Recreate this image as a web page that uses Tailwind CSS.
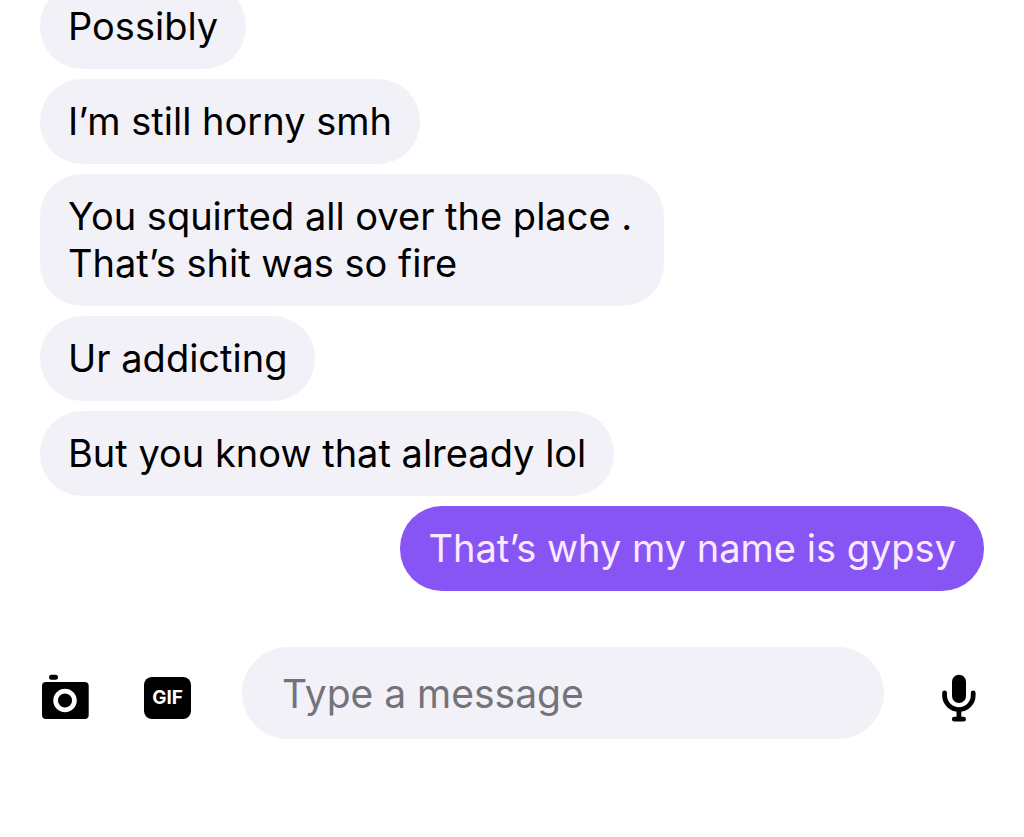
<!DOCTYPE html>
<html lang="en">
<head>
    <meta charset="UTF-8">
    <meta name="viewport" content="width=device-width, initial-scale=1.0">
    <title>Messages</title>
    <script src="https://cdn.jsdelivr.net/npm/@tailwindcss/browser@4"></script>
</head>
<body class="min-h-screen bg-white text-black font-['Inter','Liberation_Sans',sans-serif] overflow-hidden">
    <!-- conversation, scrolled so the first bubble is cut off -->
    <main class="flex flex-col items-start gap-[10px] px-10 -mt-4 text-[38px] leading-[47px]">
        <p class="bg-[#f2f1f8] rounded-[42px] px-7 py-[19px]">Possibly</p>
        <p class="bg-[#f2f1f8] rounded-[42px] px-7 py-[19px]">I’m still horny smh</p>
        <p class="bg-[#f2f1f8] rounded-[42px] pl-7 pr-8 py-[19px]">You squirted all over the place .<br>That’s shit was so fire</p>
        <p class="bg-[#f2f1f8] rounded-[42px] px-7 py-[19px]">Ur addicting</p>
        <p class="bg-[#f2f1f8] rounded-[42px] px-7 py-[19px]">But you know that already lol</p>
        <p class="bg-[#8655f4] text-[#fbeaff] rounded-[42px] px-7 py-[19px] self-end">That’s why my name is gypsy</p>
    </main>

    <!-- message bar -->
    <form class="flex items-center mt-14 pl-10 pr-12">
        <button type="button" aria-label="Camera" class="shrink-0 mt-[10px]">
            <svg class="w-[50px] h-[50px]" viewBox="0 0 50 50">
                <rect x="2" y="9" width="46.7" height="37" rx="4" fill="#000"/>
                <rect x="9" y="1.8" width="9" height="5" rx="2.4" fill="#000"/>
                <circle cx="25" cy="27.5" r="9.4" fill="none" stroke="#fff" stroke-width="4.7"/>
            </svg>
        </button>
        <button type="button" aria-label="GIF" class="shrink-0 mt-[10px] ml-[54px] w-[47px] h-[42px] rounded-lg bg-black text-white text-[19px] font-bold">GIF</button>
        <input type="text" aria-label="Message" placeholder="Type a message" class="flex-1 min-w-0 ml-[51px] h-[92px] rounded-[46px] bg-[#f2f1f8] px-10 text-[39px] placeholder:text-[#74737a] outline-none">
        <button type="button" aria-label="Voice message" class="shrink-0 mt-[10px] ml-[58px]">
            <svg class="w-[34px] h-[50px]" viewBox="0 0 34 50">
                <rect x="10" y="1.7" width="14" height="28.3" rx="7" fill="#000"/>
                <path d="M2.6 20v2.3a14.3 14.3 0 0 0 28.6 0V20M16.9 37v9M12.3 46.2h9.3" fill="none" stroke="#000" stroke-width="4.8" stroke-linecap="round"/>
            </svg>
        </button>
    </form>
</body>
</html>
